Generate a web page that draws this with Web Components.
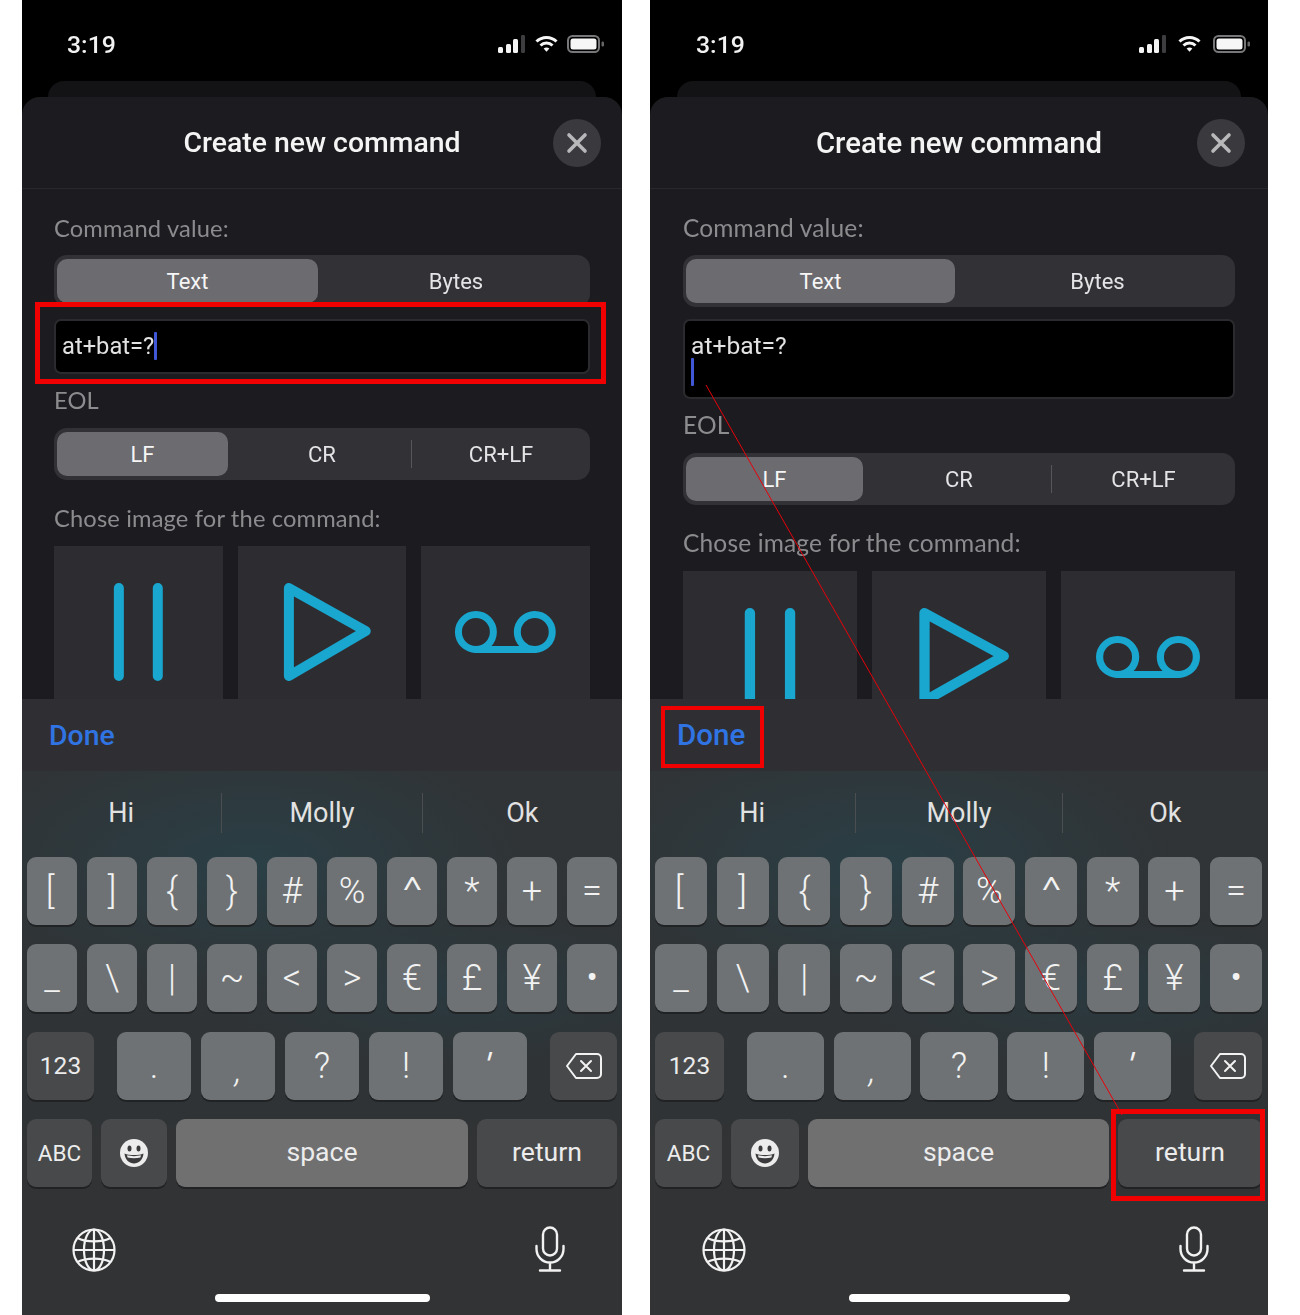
<!DOCTYPE html>
<html>
<head>
<meta charset="utf-8">
<title>Create new command</title>
<style>
  html, body { margin: 0; background: #fff; }
  body { display: flex; gap: 28px; padding-left: 22px; width: 1278px; height: 1315px; overflow: hidden; font-family: "Roboto", "Liberation Sans", sans-serif; }
</style>
</head>
<body>
<phone-frame style="--w:600px;--pad:32px;--back:26px;--sicon:9.5px;--tpad:45px;--close-r:21px;--title:28.4px;--lab:23.7px;--done:28.4px;--input:23.7px">
  <sheet-header>Create new command</sheet-header>
  <form-label>Command value:</form-label>
  <seg-control>
    <seg-item selected style="flex:0 0 261px">Text</seg-item>
    <seg-item style="padding-left:7px">Bytes</seg-item>
  </seg-control>
  <text-field style="--h:55px;--cy:11px"><span>at+bat=?</span><i></i></text-field>
  <form-label style="--t:11px">EOL</form-label>
  <seg-control style="--mt:13px">
    <seg-item selected style="flex:0 0 171px">LF</seg-item>
    <seg-item style="flex:0 0 183px;padding-left:5px">CR</seg-item>
    <seg-item divided style="padding-left:4px">CR+LF</seg-item>
  </seg-control>
  <form-label style="--t:23px">Chose image for the command:</form-label>
  <icon-tiles style="--g:15px"></icon-tiles>
  <key-board slot="keys" style="--kgap:10px;--kpr:5px;--num:67px;--del:67px;--abc:65px;--emo:66px;--ret:140px;--foot:50px;--bar:215px"></key-board>
  <red-box slot="over" style="left:13px;top:302px;width:571px;height:82px"></red-box>
</phone-frame>

<phone-frame style="--w:618px;--pad:33px;--back:27px;--sicon:12px;--tpad:46px;--close-r:23px;--title:29.3px;--lab:24.5px;--done:29.6px;--input:24.6px">
  <sheet-header>Create new command</sheet-header>
  <form-label>Command value:</form-label>
  <seg-control>
    <seg-item selected style="flex:0 0 269px">Text</seg-item>
    <seg-item style="padding-left:8px">Bytes</seg-item>
  </seg-control>
  <text-field multi style="--h:80px;--cy:12px"><span>at+bat=?</span><i></i></text-field>
  <form-label style="--t:11px">EOL</form-label>
  <seg-control style="--mt:13px">
    <seg-item selected style="flex:0 0 177px">LF</seg-item>
    <seg-item style="flex:0 0 188px;padding-left:4px">CR</seg-item>
    <seg-item divided style="padding-left:4px">CR+LF</seg-item>
  </seg-control>
  <form-label style="--t:23px">Chose image for the command:</form-label>
  <icon-tiles style="--g:15px"></icon-tiles>
  <key-board slot="keys" style="--kgap:9.7px;--kpr:6px;--num:69px;--del:68px;--abc:67px;--emo:68px;--ret:144px;--foot:52px;--bar:221px"></key-board>
  <red-box slot="over" style="left:11px;top:706px;width:103px;height:62px;--b:4px"></red-box>
  <red-box slot="over" style="left:461px;top:1109px;width:154px;height:92px"></red-box>
  <svg slot="over" width="618" height="1315" style="position:absolute;left:0;top:0;pointer-events:none"><line x1="56" y1="385" x2="472" y2="1115" stroke="#e8000a" stroke-width="1"/></svg>
</phone-frame>

<script>
class PhoneFrame extends HTMLElement {
  constructor() {
    super();
    const shadow = this.attachShadow({mode: "open"});
    shadow.innerHTML = `
      <style>
        :host { display: block; position: relative; width: var(--w); height: 1315px; flex: none; background: #000; overflow: hidden; }
        .screen { display: flex; flex-direction: column; height: 100%; filter: blur(.35px); }
        .back { height: 16px; margin: 0 var(--back); background: #131316; border-radius: 16px 16px 0 0; flex: none; }
        .sheet { flex: 1; min-height: 0; overflow: hidden; background: #1c1c20; border-radius: 18px 18px 0 0; }
        .body { padding: 0 var(--pad); }
      </style>
      <div class="screen">
        <status-bar></status-bar>
        <div class="back"></div>
        <div class="sheet">
          <slot name="head"></slot>
          <div class="body"><slot></slot></div>
        </div>
        <slot name="keys"></slot>
      </div>
      <slot name="over"></slot>
    `;
    // header spans the sheet edge to edge, so it goes above the padded body
    const head = this.querySelector("sheet-header");
    if (head) head.slot = "head";
  }
}

class StatusBar extends HTMLElement {
  constructor() {
    super();
    const shadow = this.attachShadow({mode: "open"});
    shadow.innerHTML = `
      <style>
        :host { display: flex; align-items: center; height: 81px; padding: 7px 18px 0 var(--tpad); box-sizing: border-box; color: #f2f2f2; flex: none; }
        .time { font: 500 24.8px "Roboto", sans-serif; flex: 1; }
        .icons { display: flex; align-items: center; gap: var(--sicon); }
        svg { display: block; }
      </style>
      <div class="time">3:19</div>
      <div class="icons">
        <svg width="27" height="18" viewBox="0 0 27 18">
          <rect x="0" y="12" width="5" height="6" rx="1.5" fill="#f4f4f4"/>
          <rect x="8" y="9" width="5" height="9" rx="1.5" fill="#f4f4f4"/>
          <rect x="15" y="4" width="5" height="14" rx="1.5" fill="#f4f4f4"/>
          <rect x="23" y="0" width="4" height="18" rx="1.2" fill="#3d3d3f"/>
        </svg>
        <svg width="23" height="18" viewBox="0 0 23 18" fill="none" stroke="#f6f6f6" stroke-width="3">
          <path d="M1.5 6.5C7 1 16 1 21.5 6.5"/>
          <path d="M5.5 10.5C8.8 7.3 14.2 7.3 17.5 10.5"/>
          <path d="M8.6 13.6L11.5 16.8L14.4 13.6C12.6 12.2 10.4 12.2 8.6 13.6Z" fill="#f6f6f6" stroke="none"/>
        </svg>
        <svg width="37" height="18" viewBox="0 0 37 18">
          <rect x="1" y="1" width="31" height="16" rx="4.5" fill="none" stroke="#77777a" stroke-width="2"/>
          <rect x="3.5" y="3.5" width="26" height="11" rx="2.5" fill="#f6f6f6"/>
          <rect x="34.5" y="6.5" width="2.5" height="5" rx="1.2" fill="#666"/>
        </svg>
      </div>
    `;
  }
}

class SheetHeader extends HTMLElement {
  constructor() {
    super();
    const shadow = this.attachShadow({mode: "open"});
    shadow.innerHTML = `
      <style>
        :host { display: grid; grid-template-columns: 1fr auto 1fr; align-items: center; height: 92px; border-bottom: 1px solid #28282c; box-sizing: border-box; padding: 0 var(--close-r); }
        .title { grid-column: 2; font: 500 var(--title) "Roboto", sans-serif; color: #f4f4f4; white-space: nowrap; }
        .close { grid-column: 3; justify-self: end; width: 48px; height: 48px; border-radius: 50%; background: #3a3a3e; display: flex; align-items: center; justify-content: center; }
      </style>
      <div class="title"><slot></slot></div>
      <div class="close">
        <svg width="22" height="22" viewBox="0 0 22 22" stroke="#b8b8ba" stroke-width="3.6" stroke-linecap="round"><path d="M3 3L19 19M19 3L3 19"/></svg>
      </div>
    `;
  }
}

class FormLabel extends HTMLElement {
  constructor() {
    super();
    const shadow = this.attachShadow({mode: "open"});
    shadow.innerHTML = `
      <style>
        :host { display: block; margin-top: var(--t, 24px); font: 400 var(--lab)/30px "Lato", sans-serif; color: #8c8c8f; letter-spacing: .15px; white-space: nowrap; }
      </style>
      <slot></slot>
    `;
  }
}

class SegControl extends HTMLElement {
  constructor() {
    super();
    const shadow = this.attachShadow({mode: "open"});
    shadow.innerHTML = `
      <style>
        :host { display: flex; height: 52px; margin-top: var(--mt, 12px); padding: 4px 3px; box-sizing: border-box; background: #313136; border-radius: 13px; }
      </style>
      <slot></slot>
    `;
  }
}

class SegItem extends HTMLElement {
  constructor() {
    super();
    const shadow = this.attachShadow({mode: "open"});
    shadow.innerHTML = `
      <style>
        :host { flex: 1; box-sizing: border-box; display: flex; align-items: center; justify-content: center; position: relative; font: 400 22px "Roboto", sans-serif; color: #e4e4e6; }
        :host([selected]) { background: #6b6b70; border-radius: 10px; color: #f6f6f6; }
        :host([divided])::after { content: ""; position: absolute; left: 0; top: 8px; bottom: 8px; width: 1px; background: #56565b; }
      </style>
      <slot></slot>
    `;
  }
}

class TextField extends HTMLElement {
  constructor() {
    super();
    const shadow = this.attachShadow({mode: "open"});
    shadow.innerHTML = `
      <style>
        :host { display: block; height: var(--h); margin-top: 12px; padding: var(--cy) 6px 0; box-sizing: border-box; background: #000; border: 2px solid #2b2b2f; border-radius: 7px; font: 400 var(--input)/28px "Roboto", sans-serif; color: #e2e2e2; white-space: nowrap; }
        ::slotted(i) { display: inline-block; width: 3px; height: 28px; background: #4058d8; vertical-align: top; border-radius: 1px; }
        :host([multi]) ::slotted(i) { display: block; }
        :host([multi]) ::slotted(span) { display: block; line-height: 25px; }
      </style>
      <slot></slot>
    `;
  }
}

class IconTiles extends HTMLElement {
  constructor() {
    super();
    const shadow = this.attachShadow({mode: "open"});
    shadow.innerHTML = `
      <style>
        :host { display: grid; grid-template-columns: repeat(3, 1fr); gap: var(--g); margin-top: 13px; }
        .tile { height: 220px; background: #2d2d31; }
        svg { display: block; width: 100%; height: 150px; fill: none; stroke: #19a7d0; stroke-linecap: round; stroke-linejoin: round; }
      </style>
      <div class="tile">
        <svg viewBox="0 0 169 150" preserveAspectRatio="none" stroke-width="10"><path d="M65 42V130M104 42V130"/></svg>
      </div>
      <div class="tile">
        <svg viewBox="0 0 169 150" preserveAspectRatio="none" stroke-width="10"><path d="M51 42L128 85L51 130Z"/></svg>
      </div>
      <div class="tile">
        <svg viewBox="0 0 169 150" preserveAspectRatio="none" stroke-width="7"><circle cx="55" cy="86" r="17.5"/><circle cx="114" cy="86" r="17.5"/><path d="M55 103.5H114"/></svg>
      </div>
    `;
  }
}

class KbKey extends HTMLElement {
  constructor() {
    super();
    const shadow = this.attachShadow({mode: "open"});
    shadow.innerHTML = `
      <style>
        :host { flex: 1 1 0; min-width: 0; height: 68px; display: flex; align-items: center; justify-content: center; background: #6f7274; border-radius: 9px; box-shadow: 0 2px 0 #202224; font: 300 36px "Roboto", sans-serif; color: #f2f2f2; }
        :host([dark]) { background: #48494b; }
        :host([word]) { font-size: 24.5px; font-weight: 400; color: #ececec; }
        :host([wide]) { font-size: 26.6px; padding-bottom: 4px; box-sizing: border-box; }
        :host([plain]) { background: #707071; }
        ::slotted(span) { display: inline-block; }
      </style>
      <slot></slot>
    `;
  }
}

class KeyBoard extends HTMLElement {
  constructor() {
    super();
    const shadow = this.attachShadow({mode: "open"});
    const keys = s => s.split(" ").map(k => `<kb-key>${k}</kb-key>`).join("");
    shadow.innerHTML = `
      <style>
        :host { display: block; flex: none; color: #f0f0f0; }
        .done { height: 72px; background: #2f2f33; display: flex; align-items: center; padding-left: 27px; font: 500 var(--done) "Roboto", sans-serif; color: #2f74e2; }
        .kb { height: 544px; box-sizing: border-box; background:
            radial-gradient(ellipse 46% 24% at 38% 17%, #2a3f46 0%, rgba(42,63,70,0) 100%),
            radial-gradient(ellipse 40% 14% at 72% 40%, #2a3a40 0%, rgba(42,58,64,0) 100%),
            linear-gradient(#303436 0, #2f3335 60%, #323334 72%, #323335 100%); }
        .sug { display: grid; grid-template-columns: repeat(3, 1fr); height: 84px; align-items: center; font: 400 27px "Roboto", sans-serif; color: #e2e2e2; margin-left: -1px; }
        .sug div { text-align: center; line-height: 40px; }
        .sug div + div { border-left: 1px solid #4a4e50; }
        .rows { display: flex; flex-direction: column; gap: 19.4px; padding: 2px var(--kpr) 0 5px; }
        .row { display: flex; gap: var(--kgap); }
        .r4 { gap: 9px; }
        .foot { display: flex; justify-content: space-between; padding: 41px var(--foot) 0; }
        .foot svg { display: block; fill: none; stroke: #f2f2f2; }
        .home { width: var(--bar); height: 8px; margin: 22px auto 0; background: #fff; border-radius: 4px; }
      </style>
      <div class="done">Done</div>
      <div class="kb">
        <div class="sug"><div>Hi</div><div>Molly</div><div>Ok</div></div>
        <div class="rows">
          <div class="row">
            <kb-key><span style="transform:translateX(-2px)">[</span></kb-key>
            ${keys("] { } # %")}
            <kb-key><span style="transform:scaleX(1.4)">^</span></kb-key>
            ${keys("* + =")}
          </div>
          <div class="row">${keys("_ \\ | ~ &lt; &gt; € £ ¥ •")}</div>
          <div class="row">
            <kb-key dark word style="flex:0 0 var(--num);margin-right:13px">123</kb-key>
            <kb-key>.</kb-key>
            <kb-key><span style="transform:translateY(4px) skewX(-10deg)">,</span></kb-key>
            <kb-key>?</kb-key>
            <kb-key>!</kb-key>
            <kb-key><span style="transform:translate(-3px,1px) skewX(-14deg);font-weight:400">'</span></kb-key>
            <kb-key dark style="flex:0 0 var(--del);margin-left:13px">
              <svg width="38" height="28" viewBox="0 0 38 28" fill="none" stroke="#f2f2f2" stroke-width="2" stroke-linejoin="round"><path d="M11 2H32A4 4 0 0 1 36 6V22A4 4 0 0 1 32 26H11L2 14Z"/><path d="M16 9L26 19M26 9L16 19" stroke-linecap="round"/></svg>
            </kb-key>
          </div>
          <div class="row r4">
            <kb-key dark word style="flex:0 0 var(--abc);font-size:22.5px">ABC</kb-key>
            <kb-key dark style="flex:0 0 var(--emo)">
              <svg width="28" height="28" viewBox="0 0 28 28"><circle cx="14" cy="14" r="14" fill="#ececec"/><ellipse cx="9.5" cy="9.5" rx="2" ry="3" fill="#3a3a3c"/><ellipse cx="18.5" cy="9.5" rx="2" ry="3" fill="#3a3a3c"/><path d="M4.5 14.5C9 16.5 19 16.5 23.5 14.5C23 21 18.5 24.5 14 24.5C9.5 24.5 5 21 4.5 14.5Z" fill="#3a3a3c"/><path d="M7 16.3C11 17.4 17 17.4 21 16.3L20.4 18.4C16.5 19.4 11.5 19.4 7.6 18.4Z" fill="#ececec"/></svg>
            </kb-key>
            <kb-key word wide plain>space</kb-key>
            <kb-key dark word wide style="flex:0 0 var(--ret)">return</kb-key>
          </div>
        </div>
        <div class="foot">
          <svg width="44" height="44" viewBox="0 0 44 44" stroke-width="2.2"><circle cx="22" cy="22" r="20.5"/><ellipse cx="22" cy="22" rx="10" ry="20.5"/><path d="M22 1.5V42.5M1.5 22H42.5"/><path d="M5.5 10C14 14.5 30 14.5 38.5 10M5.5 34C14 29.5 30 29.5 38.5 34"/></svg>
          <svg width="44" height="46" viewBox="0 0 44 46" stroke-width="2.4" stroke-linecap="round" style="margin-top:-2px"><rect x="15" y="1.5" width="14" height="28" rx="7"/><path d="M8.5 20V23A13.5 13.5 0 0 0 35.5 23V20M22 36.5V44.5M12 44.5H32"/></svg>
        </div>
        <div class="home"></div>
      </div>
    `;
  }
}

class RedBox extends HTMLElement {
  constructor() {
    super();
    const shadow = this.attachShadow({mode: "open"});
    shadow.innerHTML = `
      <style>
        :host { position: absolute; box-sizing: border-box; border: var(--b, 5px) solid #f00000; pointer-events: none; }
      </style>
    `;
  }
}

customElements.define("status-bar", StatusBar);
customElements.define("sheet-header", SheetHeader);
customElements.define("form-label", FormLabel);
customElements.define("seg-control", SegControl);
customElements.define("seg-item", SegItem);
customElements.define("text-field", TextField);
customElements.define("icon-tiles", IconTiles);
customElements.define("kb-key", KbKey);
customElements.define("key-board", KeyBoard);
customElements.define("red-box", RedBox);
customElements.define("phone-frame", PhoneFrame);
</script>
</body>
</html>
